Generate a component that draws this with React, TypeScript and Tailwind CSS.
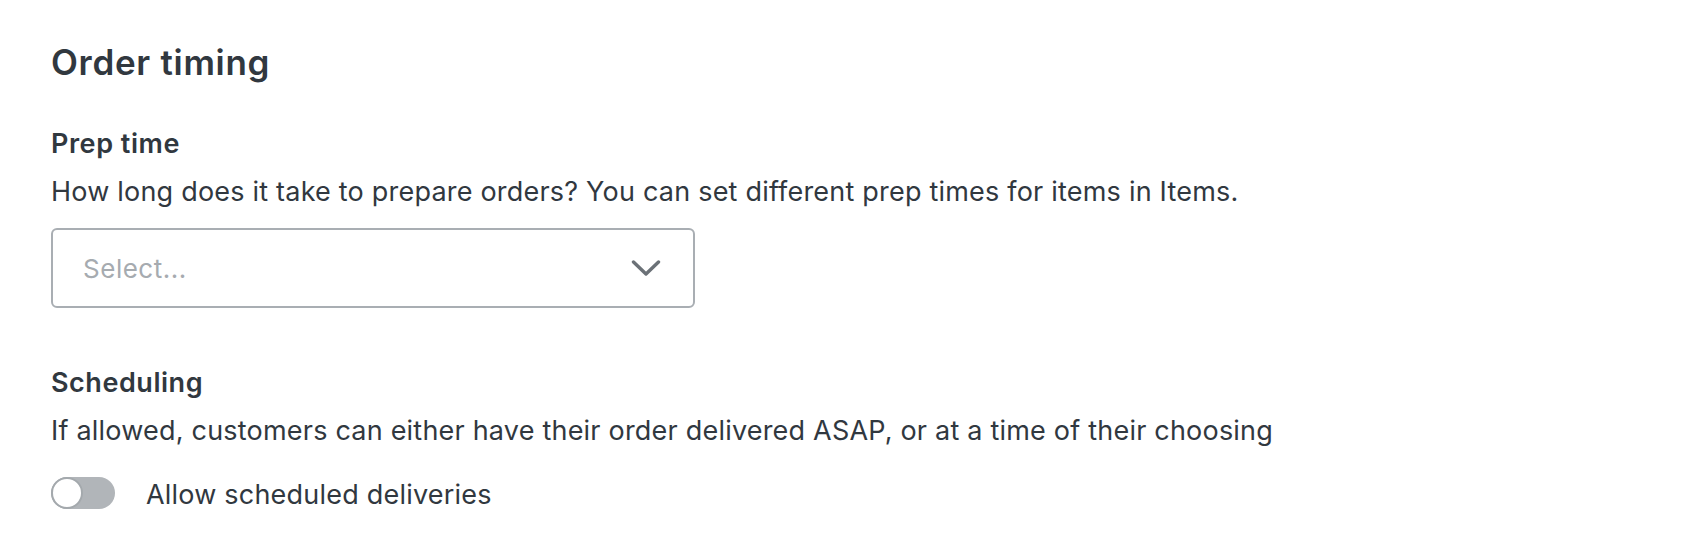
import { useState } from "react";

function Chevron() {
  return (
    <svg width="30" height="16" viewBox="0 0 30 16" fill="none">
      <path d="M2.5 2 L15 14 L27.5 2" stroke="#6b7177" strokeWidth="3.4" strokeLinecap="round" strokeLinejoin="round" />
    </svg>
  );
}

export default function App() {
  const [on, setOn] = useState(false);

  return (
    <div className="min-h-screen bg-white pl-[51px] pt-[44px] text-[#31383f] font-['Inter',sans-serif] tracking-[0.013em]">
      <h1 className="text-[35px] leading-[36px] font-semibold tracking-[0.02em]">Order timing</h1>

      <div className="mt-[50px]">
        <h2 className="text-[27px] leading-[28px] font-semibold tracking-[0.02em]">Prep time</h2>
        <p className="mt-[20px] text-[27px] leading-[28px]">
          How long does it take to prepare orders? You can set different prep times for items in Items.
        </p>
        <button className="mt-[22px] flex h-[80px] w-[644px] items-center justify-between rounded-[6px] border-2 border-[#a9aeb3] pl-[30px] pr-[32px] text-left">
          <span className="text-[26px] text-[#a6abb0] tracking-[0.02em]">Select...</span>
          <Chevron />
        </button>
      </div>

      <div className="mt-[61px]">
        <h2 className="text-[27px] leading-[28px] font-semibold tracking-[0.02em]">Scheduling</h2>
        <p className="mt-[20px] text-[27px] leading-[28px]">
          If allowed, customers can either have their order delivered ASAP, or at a time of their choosing
        </p>
        <label className="mt-[31px] flex items-center gap-[31px]">
          <button
            onClick={() => setOn(!on)}
            className={`relative h-[32px] w-[64px] rounded-full ${on ? "bg-[#006aff]" : "bg-[#b1b5b9]"}`}
          >
            <span
              className={`absolute top-0 h-[32px] w-[32px] rounded-full border-2 border-[#a4a9ad] bg-white ${on ? "left-[32px]" : "left-0"}`}
            />
          </button>
          <span className="pt-[5px] text-[27px] leading-[28px]">Allow scheduled deliveries</span>
        </label>
      </div>
    </div>
  );
}
